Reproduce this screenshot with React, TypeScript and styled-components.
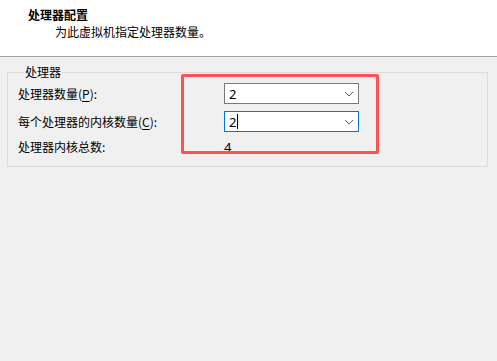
import React from "react";
import styled, { createGlobalStyle } from "styled-components";

const GlobalStyle = createGlobalStyle`
    html, body {
        margin: 0;
        padding: 0;
        background: #f0f0f0;
    }
    body {
        font-family: "Noto Sans CJK SC", "Microsoft YaHei UI", sans-serif;
        font-size: 12px;
        color: #000;
    }
`;

const Page = styled.div`
    position: relative;
    width: 497px;
    height: 361px;
    overflow: hidden;
    background: #f0f0f0;
`;

const Header = styled.div`
    box-sizing: border-box;
    height: 57px;
    padding: 7px 0 0 28px;
    background: #fff;
    border-bottom: 1px solid #a0a0a0;
`;

const Title = styled.div`
    font-weight: bold;
    font-size: 12px;
    line-height: 16px;
`;

const Subtitle = styled.div`
    padding-left: 27px;
    line-height: 18px;
`;

const Body = styled.div`
    padding: 7px 9px 0 7px;
`;

const Group = styled.fieldset`
    margin: 0;
    padding: 3px 10px 11px 10px;
    border: 1px solid #dcdcdc;
    min-width: 0;
`;

const Legend = styled.legend`
    padding: 0 1px;
    margin-left: 6px;
    line-height: 16px;
`;

const Grid = styled.div`
    display: grid;
    grid-template-columns: 206px 135px;
    grid-template-rows: 21px 21px 16px;
    row-gap: 7px;
    align-items: center;
`;

const Label = styled.div`
    line-height: 16px;
    white-space: nowrap;
`;

const Combo = styled.div<{ focused?: boolean }>`
    box-sizing: border-box;
    height: 21px;
    display: flex;
    align-items: center;
    padding: 0 4px 0 4px;
    background: #fff;
    border: 1px solid ${(p) => (p.focused ? "#0078d7" : "#7a7a7a")};
`;

const ComboText = styled.span`
    flex: 1;
    font-family: "Noto Sans", "Segoe UI", sans-serif;
    font-size: 13px;
    line-height: 16px;
    display: flex;
    align-items: center;
`;

const Caret = styled.span`
    display: inline-block;
    width: 1px;
    height: 15px;
    background: #000;
    margin-left: 1px;
`;

const Value = styled.div`
    font-family: "Noto Sans", "Segoe UI", sans-serif;
    font-size: 13px;
    line-height: 16px;
`;

const Mnemonic = styled.span`
    text-decoration: underline;
    text-underline-offset: 2px;
`;

const Highlight = styled.div`
    position: absolute;
    left: 181px;
    top: 74px;
    width: 198px;
    height: 80px;
    box-sizing: border-box;
    border: 3px solid #fb5252;
    border-radius: 2px;
    pointer-events: none;
`;

function Chevron() {
    return (
        <svg width="10" height="6" viewBox="0 0 10 6">
            <path d="M1 1 L5 5 L9 1" fill="none" stroke="#606060" strokeWidth="1" />
        </svg>
    );
}

export default function App() {
    return (
        <Page>
            <GlobalStyle />
            <Header>
                <Title>处理器配置</Title>
                <Subtitle>为此虚拟机指定处理器数量。</Subtitle>
            </Header>
            <Body>
                <Group>
                    <Legend>处理器</Legend>
                    <Grid>
                        <Label>处理器数量(<Mnemonic>P</Mnemonic>):</Label>
                        <Combo>
                            <ComboText>2</ComboText>
                            <Chevron />
                        </Combo>
                        <Label>每个处理器的内核数量(<Mnemonic>C</Mnemonic>):</Label>
                        <Combo focused>
                            <ComboText>2<Caret /></ComboText>
                            <Chevron />
                        </Combo>
                        <Label>处理器内核总数:</Label>
                        <Value>4</Value>
                    </Grid>
                </Group>
            </Body>
            <Highlight />
        </Page>
    );
}
